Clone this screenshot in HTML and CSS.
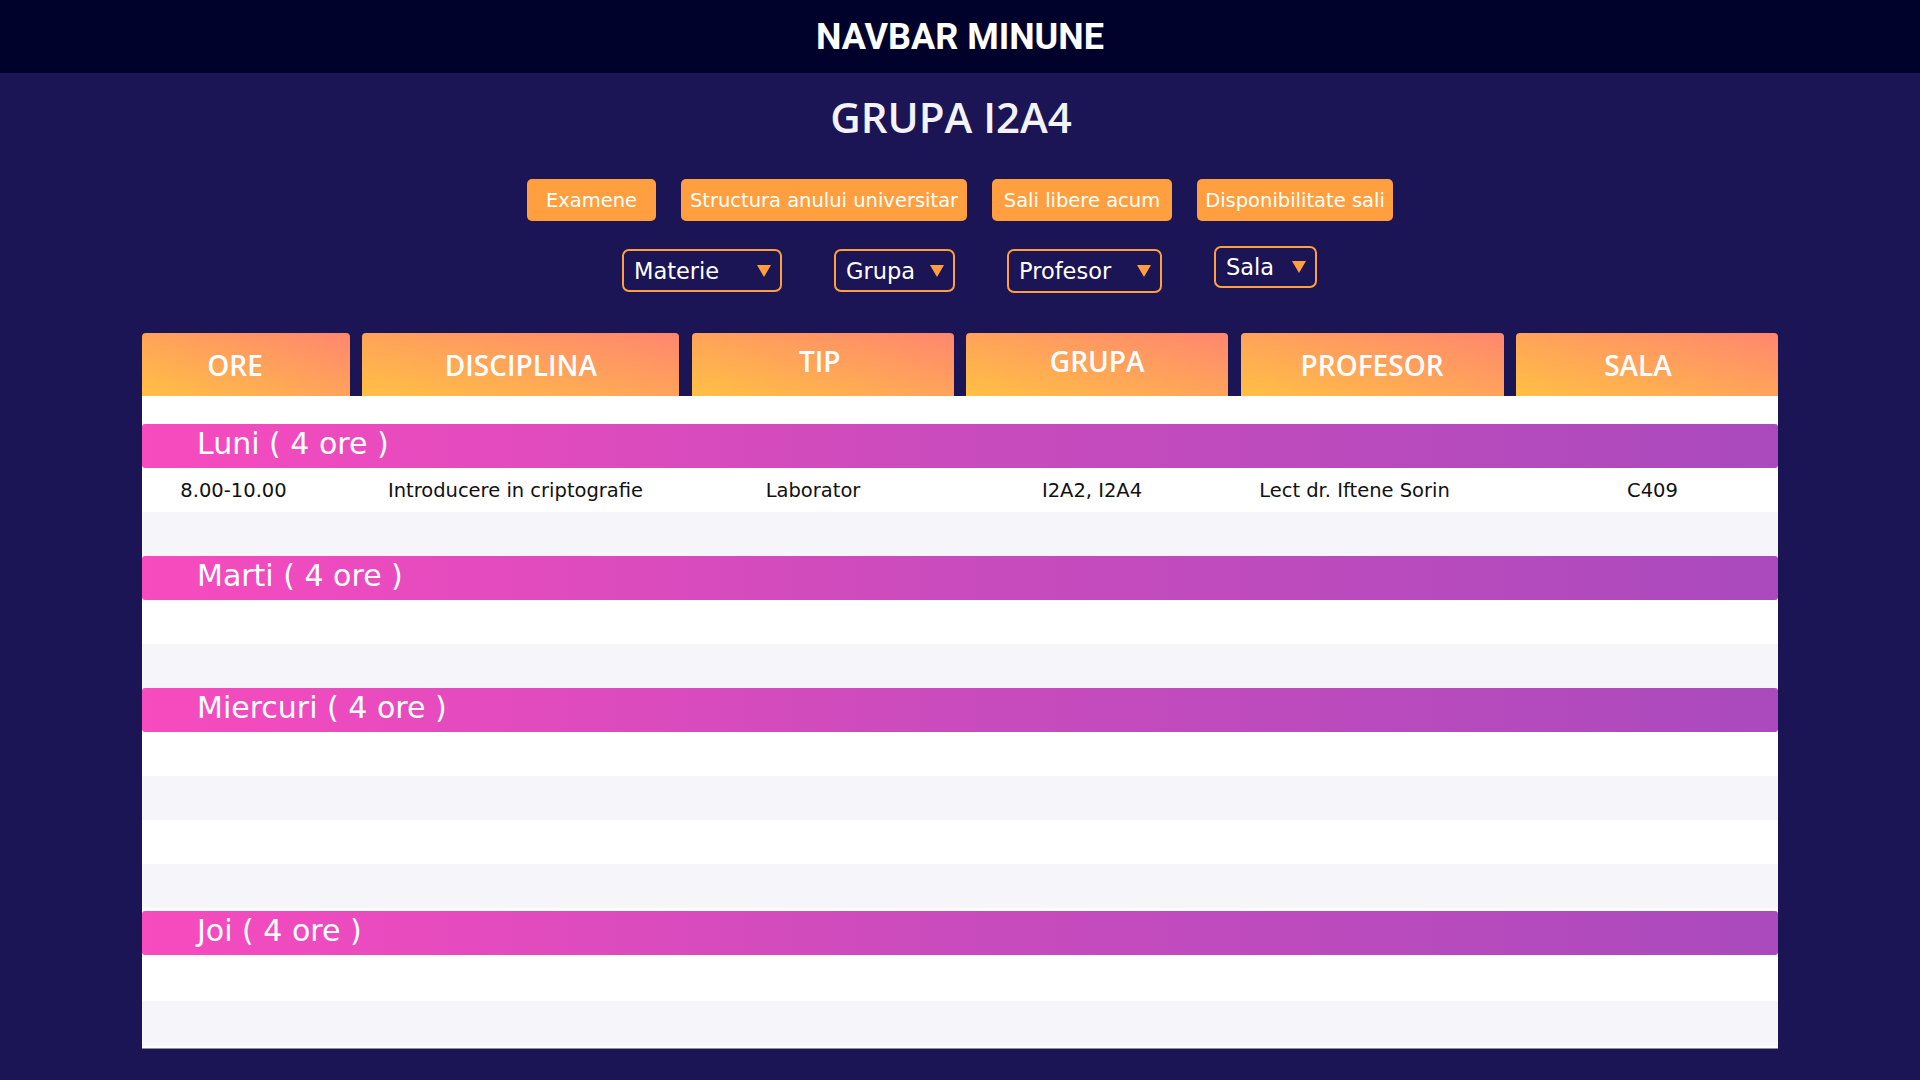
FILE: index.html
```html
<!DOCTYPE html>
<html lang="ro">
<head>
<meta charset="utf-8">
<title>Orar - Grupa I2A4</title>
<link rel="stylesheet" href="styles.css">
</head>
<body>
<header class="navbar">NAVBAR MINUNE</header>
<main class="page">
  <h1 class="title">GRUPA I2A4</h1>
  <nav class="buttons">
    <a class="btn btn--examene">Examene</a>
    <a class="btn btn--structura">Structura anului universitar</a>
    <a class="btn btn--sali">Sali libere acum</a>
    <a class="btn btn--disp">Disponibilitate sali</a>
  </nav>
  <div class="filters">
    <div class="select select--materie"><span>Materie</span><svg class="arrow" viewBox="0 0 14 12"><polygon points="0,0 14,0 7,12"/></svg></div>
    <div class="select select--grupa"><span>Grupa</span><svg class="arrow" viewBox="0 0 14 12"><polygon points="0,0 14,0 7,12"/></svg></div>
    <div class="select select--profesor"><span>Profesor</span><svg class="arrow" viewBox="0 0 14 12"><polygon points="0,0 14,0 7,12"/></svg></div>
    <div class="select select--sala"><span>Sala</span><svg class="arrow" viewBox="0 0 14 12"><polygon points="0,0 14,0 7,12"/></svg></div>
  </div>
  <section class="schedule">
    <div class="thead">
      <div class="th th--ore">ORE</div>
      <div class="th">DISCIPLINA</div>
      <div class="th th--up th--tip">TIP</div>
      <div class="th th--up">GRUPA</div>
      <div class="th">PROFESOR</div>
      <div class="th th--sala">SALA</div>
    </div>
    <div class="tbody">
      <div class="spacer"></div>
      <div class="day">Luni ( 4 ore )</div>
      <div class="row">
        <div class="td td--ore">8.00-10.00</div>
        <div class="td td--disc">Introducere in criptografie</div>
        <div class="td td--tip">Laborator</div>
        <div class="td td--grupa">I2A2, I2A4</div>
        <div class="td td--prof">Lect dr. Iftene Sorin</div>
        <div class="td td--sala">C409</div>
      </div>
      <div class="row row--alt"></div>
      <div class="day">Marti ( 4 ore )</div>
      <div class="row"></div>
      <div class="row row--alt"></div>
      <div class="day">Miercuri ( 4 ore )</div>
      <div class="row"></div>
      <div class="row row--alt"></div>
      <div class="row"></div>
      <div class="row row--alt"></div>
      <div class="day day--gap">Joi ( 4 ore )</div>
      <div class="row row--tall"></div>
      <div class="row row--alt row--tall"></div>
    </div>
  </section>
</main>
</body>
</html>
```

FILE: styles.css
```css
* { box-sizing: border-box; }

html, body {
  margin: 0;
  padding: 0;
}

body {
  background: #1b1455;
  font-family: "DejaVu Sans", sans-serif;
  color: #fff;
  width: 1920px;
  height: 1080px;
  overflow: hidden;
}

.navbar {
  height: 73px;
  background: #01022b;
  display: flex;
  align-items: center;
  justify-content: center;
  font-family: Roboto, "Liberation Sans", sans-serif;
  font-weight: 700;
  font-size: 36px;
  color: #fff;
  padding-top: 1px;
}

.page {
  display: flex;
  flex-direction: column;
  align-items: center;
}

.title {
  margin: 23px 0 0 0;
  padding-right: 18px;
  font-family: "Open Sans", sans-serif;
  font-weight: 600;
  font-size: 42px;
  line-height: 42px;
  color: #f3f2f7;
}

.buttons {
  margin-top: 41px;
  display: flex;
  gap: 25px;
}

.btn {
  height: 42px;
  background: #ff9f3f;
  border-radius: 5px;
  display: flex;
  align-items: center;
  justify-content: center;
  font-size: 19.5px;
  color: #fff;
  white-space: nowrap;
  cursor: pointer;
}

.btn--examene { width: 129px; }
.btn--structura { width: 286px; }
.btn--sali { width: 180px; }
.btn--disp { width: 196px; }

.filters {
  margin-top: 28px;
  display: flex;
  align-items: flex-start;
  gap: 52px;
  padding-left: 19px;
}

.select {
  height: 43px;
  border: 2px solid #ff9f3f;
  border-radius: 7px;
  display: flex;
  align-items: center;
  justify-content: space-between;
  padding: 0 9px 0 10px;
  font-size: 22.5px;
  color: #fff;
}

.select--materie { width: 160px; }
.select--grupa { width: 121px; }
.select--profesor { width: 155px; height: 44px; }
.select--sala { width: 103px; height: 42px; margin-top: -3px; }

.arrow {
  width: 14px;
  height: 12px;
  fill: #ff9f3f;
  flex: none;
}

.schedule {
  margin-top: 40px;
  width: 1636px;
}

.thead {
  display: grid;
  grid-template-columns: 208px 317px 262px 262px 263px 1fr;
  column-gap: 12.4px;
}

.th {
  height: 63px;
  border-radius: 4px 4px 0 0;
  background: linear-gradient(to top right, #ffc043 0%, #ffa35a 50%, #ff866f 100%);
  display: flex;
  align-items: center;
  justify-content: center;
  font-family: "Open Sans", sans-serif;
  font-weight: 600;
  font-size: 28px;
  color: #fff;
}

.th--up { padding-bottom: 7px; }
.th--ore { padding-right: 22px; }
.th--tip { padding-right: 6px; }
.th--sala { padding-right: 18px; }

.tbody {
  background: #fff;
  padding-bottom: 2px;
  border-bottom: 1px solid #8d8aa3;
}

.spacer {
  height: 28px;
}

.day {
  height: 44px;
  border-radius: 3px;
  background: linear-gradient(to right, #f74bbf 0%, #c94bbd 50%, #aa4abd 100%);
  display: flex;
  align-items: center;
  padding: 0 0 5px 55px;
  font-size: 30px;
  color: #fff;
}

.day--gap { margin-top: 3px; }

.row {
  height: 44px;
  display: grid;
  grid-template-columns: 220px 329px 274px 274px 275px 1fr;
  align-items: center;
  background: #fff;
  color: #111;
  font-size: 19.5px;
}

.row--alt { background: #f6f5f9; }
.row--tall { height: 45.5px; }

.td {
  text-align: center;
  white-space: nowrap;
}

.td--ore { padding-right: 37px; }
.td--disc { padding-right: 22px; }
.td--tip { padding-right: 30px; }
.td--grupa { padding-right: 20px; }
.td--prof { padding-right: 44px; }
.td--sala { padding-left: 13px; }
```
